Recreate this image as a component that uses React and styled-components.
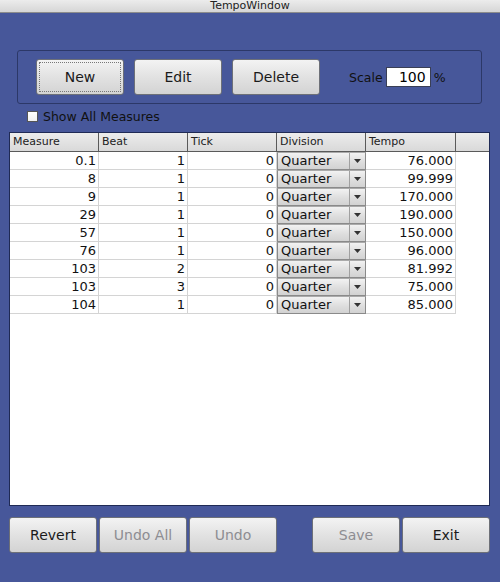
import React from "react";
import styled, { createGlobalStyle } from "styled-components";

const Global = createGlobalStyle`
  html, body { margin: 0; padding: 0; }
  body { font-family: "DejaVu Sans", "Liberation Sans", sans-serif; }
  * { box-sizing: border-box; }
`;

const Win = styled.div`
  width: 500px;
  height: 582px;
  background: #47579a;
  display: flex;
  flex-direction: column;
  overflow: hidden;
`;

const TitleBar = styled.div`
  height: 13px;
  background: linear-gradient(#ececec, #d6d6d6);
  border-bottom: 1px solid #8c8c8c;
  font-size: 11px;
  line-height: 12px;
  text-align: center;
  color: #222;
`;

const Body = styled.div`
  flex: 1;
  display: flex;
  flex-direction: column;
  padding: 37px 10px 0 9px;
`;

const TopPanel = styled.div`
  margin: 0 8px;
  height: 54px;
  border: 1px solid #2c3868;
  border-radius: 3px;
  display: flex;
  align-items: center;
  padding: 0 0 0 18px;
  gap: 10px;
`;

const Button = styled.button`
  width: 88px;
  height: 36px;
  border: 1px solid #6d7078;
  border-radius: 3px;
  background: linear-gradient(#f3f3f3, #e2e2e2 50%, #d3d3d3);
  font-family: "DejaVu Sans", sans-serif;
  font-size: 14px;
  color: ${(p) => (p.disabled ? "#8d8d92" : "#1a1a1a")};
  padding: 0;
  outline: ${(p) => (p.$focus ? "1px dotted #777" : "none")};
  outline-offset: -4px;
`;

const ScaleGroup = styled.div`
  display: flex;
  align-items: center;
  margin-left: 19px;
  font-size: 12.5px;
  color: #111;
`;

const ScaleInput = styled.div`
  width: 45px;
  height: 20px;
  margin-right: 3px;
  background: #fff;
  border: 1px solid #3a3f55;
  text-align: right;
  padding-right: 4px;
  font-size: 14px;
  line-height: 18px;
  color: #000;
`;

const ScaleLabel = styled.span`
  margin-right: 3px;
`;

const CheckRow = styled.label`
  display: flex;
  align-items: center;
  margin: 6px 0 0 18px;
  height: 12px;
  font-size: 12.5px;
  color: #111;
  gap: 5px;
`;

const Box = styled.span`
  width: 11px;
  height: 11px;
  background: linear-gradient(#fff, #f0f0f0);
  border: 1px solid #555;
`;

const Table = styled.div`
  margin-top: 10px;
  height: 374px;
  background: #fff;
  border: 1px solid #1f2a55;
  display: flex;
  flex-direction: column;
`;

const Grid = styled.div`
  display: grid;
  grid-template-columns: 89px 89px 89px 89px 90px 1fr;
`;

const HeadCell = styled.div`
  height: 19px;
  background: linear-gradient(#ececec, #d9d9d9);
  border-right: ${(p) => (p.$last ? "none" : "1px solid #5a5a5a")};
  border-bottom: 1px solid #5a5a5a;
  font-size: 11px;
  line-height: 18px;
  padding-left: 3px;
  color: #222;
`;

const Cell = styled.div`
  height: 18px;
  border-right: 1px solid #d4d4d4;
  border-bottom: 1px solid #d4d4d4;
  font-size: 13px;
  line-height: 17px;
  text-align: right;
  padding-right: 2px;
  color: #111;
`;

const Blank = styled.div`
  height: 18px;
`;

const Combo = styled.div`
  height: 18px;
  display: flex;
  border: 1px solid #8a8a8a;
  border-top-color: #aaa;
  background: linear-gradient(#f2f2f2, #dedede 55%, #d2d2d2);
  font-size: 13px;
  line-height: 16px;
  color: #111;
`;

const ComboText = styled.span`
  flex: 1;
  padding-left: 3px;
  border-right: 1px solid #a0a0a0;
`;

const ComboArrow = styled.span`
  width: 15px;
  display: flex;
  align-items: center;
  justify-content: center;
`;

const Footer = styled.div`
  display: flex;
  margin-top: 11px;
  gap: 2px;
`;

const Spacer = styled.div`
  flex: 1;
`;

const rows = [
  ["0.1", "1", "0", "76.000"],
  ["8", "1", "0", "99.999"],
  ["9", "1", "0", "170.000"],
  ["29", "1", "0", "190.000"],
  ["57", "1", "0", "150.000"],
  ["76", "1", "0", "96.000"],
  ["103", "2", "0", "81.992"],
  ["103", "3", "0", "75.000"],
  ["104", "1", "0", "85.000"],
];

export default function App() {
  return (
    <Win>
      <Global />
      <TitleBar>TempoWindow</TitleBar>
      <Body>
        <TopPanel>
          <Button $focus>New</Button>
          <Button>Edit</Button>
          <Button>Delete</Button>
          <ScaleGroup>
            <ScaleLabel>Scale</ScaleLabel>
            <ScaleInput>100</ScaleInput>%
          </ScaleGroup>
        </TopPanel>
        <CheckRow>
          <Box />
          Show All Measures
        </CheckRow>
        <Table>
          <Grid>
            <HeadCell>Measure</HeadCell>
            <HeadCell>Beat</HeadCell>
            <HeadCell>Tick</HeadCell>
            <HeadCell>Division</HeadCell>
            <HeadCell>Tempo</HeadCell>
            <HeadCell $last />
            {rows.map((r, i) => (
              <React.Fragment key={i}>
                <Cell>{r[0]}</Cell>
                <Cell>{r[1]}</Cell>
                <Cell>{r[2]}</Cell>
                <Combo>
                  <ComboText>Quarter</ComboText>
                  <ComboArrow>
                    <svg width="7" height="4" viewBox="0 0 7 4">
                      <path d="M0 0h7L3.5 4z" fill="#333" />
                    </svg>
                  </ComboArrow>
                </Combo>
                <Cell>{r[3]}</Cell>
                <Blank />
              </React.Fragment>
            ))}
          </Grid>
        </Table>
        <Footer>
          <Button>Revert</Button>
          <Button disabled>Undo All</Button>
          <Button disabled>Undo</Button>
          <Spacer />
          <Button disabled>Save</Button>
          <Button>Exit</Button>
        </Footer>
      </Body>
    </Win>
  );
}
